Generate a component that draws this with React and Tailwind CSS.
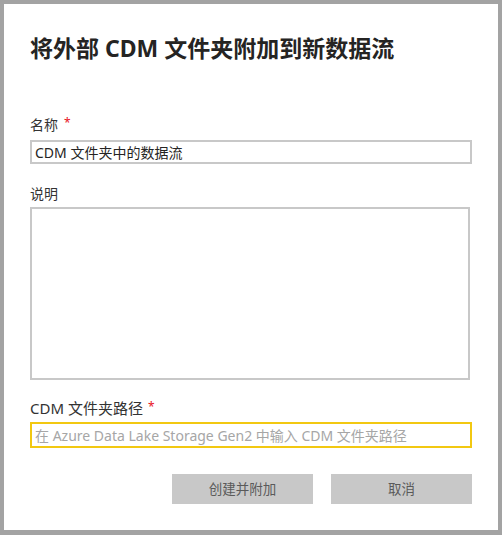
const font = { fontFamily: '"Noto Sans", "Noto Sans CJK SC", sans-serif' }

export default function App() {
  return (
    <div
      className="w-[502px] h-[535px] bg-[#a3a3a3] pt-[4px] pl-[4px] pr-[4px] pb-[5px]"
      style={font}
    >
      <div className="h-full bg-white pl-[26px] pt-[29px]">
        {/* Title */}
        <h1 className="text-[23px] leading-[30px] font-bold text-[#252423]">
          将外部 CDM 文件夹附加到新数据流
        </h1>

        {/* 名称 */}
        <label className="mt-[51px] flex items-center h-[20px] text-[14px] text-[#333]">
          名称
          <span className="ml-[6px] -mt-[3px] text-[#e81123] text-[12px] leading-none">*</span>
        </label>
        <div className="mt-[6px] w-[442px] h-[24px] border-2 border-[#c8c8c8] flex items-center pl-[3px] text-[14px] text-[#252423]">
          CDM 文件夹中的数据流
        </div>

        {/* 说明 */}
        <label className="mt-[19px] flex items-center h-[20px] text-[14px] text-[#333]">
          说明
        </label>
        <div className="mt-[4px] w-[440px] h-[173px] border-2 border-[#c8c8c8]" />

        {/* CDM 文件夹路径 */}
        <label className="mt-[18px] flex items-center h-[20px] text-[15px] text-[#333]">
          CDM 文件夹路径
          <span className="ml-[5px] -mt-[3px] text-[#e81123] text-[12px] leading-none">*</span>
        </label>
        <div className="mt-[4px] w-[442px] h-[26px] border-2 border-[#f2c811] flex items-center pl-[3px] text-[14px] text-[#a6a6a6] whitespace-nowrap overflow-hidden">
          在 Azure Data Lake Storage Gen2 中输入 CDM 文件夹路径
        </div>

        {/* Buttons */}
        <div className="mt-[26px] w-[442px] flex justify-end gap-[18px]">
          <button className="w-[141px] h-[30px] bg-[#c8c8c8] text-[13.5px] text-[#5a5a5a]">
            创建并附加
          </button>
          <button className="w-[141px] h-[30px] bg-[#c8c8c8] text-[13.5px] text-[#5a5a5a]">
            取消
          </button>
        </div>
      </div>
    </div>
  )
}
